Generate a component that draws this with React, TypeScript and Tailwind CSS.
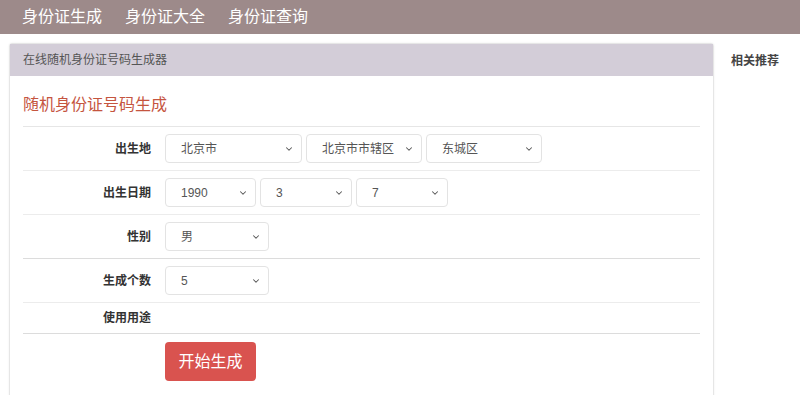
import { ChevronDown } from 'lucide-react';

const font = { fontFamily: '"Liberation Sans", "Noto Sans CJK SC", sans-serif' };

function Select({ value, width }: { value: string; width: string }) {
  return (
    <div
      className={`${width} h-[29px] flex items-center justify-between pl-[15px] pr-[7px] border border-[#e3e3e3] rounded-[4px] bg-white text-[12px] text-[#555]`}
    >
      <span>{value}</span>
      <ChevronDown className="w-[10px] h-[10px] text-[#555]" strokeWidth={2.5} />
    </div>
  );
}

function Row({ label, children, dark }: { label: string; children?: React.ReactNode; dark?: boolean }) {
  return (
    <div className={`flex items-center h-[44px] border-b ${dark ? 'border-[#dcdcdc]' : 'border-[#ececec]'}`}>
      <div className="w-[128px] text-right text-[12px] font-bold text-[#333]">{label}</div>
      <div className="ml-[14px] flex gap-[4px]">{children}</div>
    </div>
  );
}

export default function App() {
  return (
    <div className="w-[800px] h-[395px] bg-white overflow-hidden" style={font}>
      {/* Navbar */}
      <div className="h-[34px] bg-[#9d8a8a] flex items-center pl-[22px] gap-[23px] text-[16px] text-white">
        <span>身份证生成</span>
        <span>身份证大全</span>
        <span>身份证查询</span>
      </div>

      <div className="flex pt-[9px] pl-[9px]">
        {/* Main panel */}
        <div className="w-[705px] h-[360px] border border-[#e6e6e6] rounded-t-[3px] shadow-[0_0_2px_rgba(0,0,0,0.08)]">
          <div className="h-[32px] bg-[#d3cdd8] flex items-center pl-[13px] text-[12px] text-[#555]">
            在线随机身份证号码生成器
          </div>
          <div className="px-[13px]">
            <div className="h-[51px] flex items-end pb-[9px] text-[16px] text-[#c5553f] border-b border-[#e6e6e6]">
              随机身份证号码生成
            </div>
            <Row label="出生地">
              <Select value="北京市" width="w-[137px]" />
              <Select value="北京市市辖区" width="w-[116px]" />
              <Select value="东城区" width="w-[116px]" />
            </Row>
            <Row label="出生日期">
              <Select value="1990" width="w-[91px]" />
              <Select value="3" width="w-[92px]" />
              <Select value="7" width="w-[92px]" />
            </Row>
            <Row label="性别" dark>
              <Select value="男" width="w-[104px]" />
            </Row>
            <Row label="生成个数">
              <Select value="5" width="w-[104px]" />
            </Row>
            <div className="flex items-center h-[31px] border-b border-[#dcdcdc]">
              <div className="w-[128px] text-right text-[12px] font-bold text-[#333]">使用用途</div>
            </div>
            <div className="pt-[8px] pl-[142px]">
              <button className="w-[91px] h-[39px] rounded-[4px] bg-[#d9534f] text-white text-[16px]">
                开始生成
              </button>
            </div>
          </div>
        </div>

        {/* Sidebar */}
        <div className="pl-[17px] pt-[9px] text-[12px] font-bold text-[#444]">相关推荐</div>
      </div>
    </div>
  );
}
